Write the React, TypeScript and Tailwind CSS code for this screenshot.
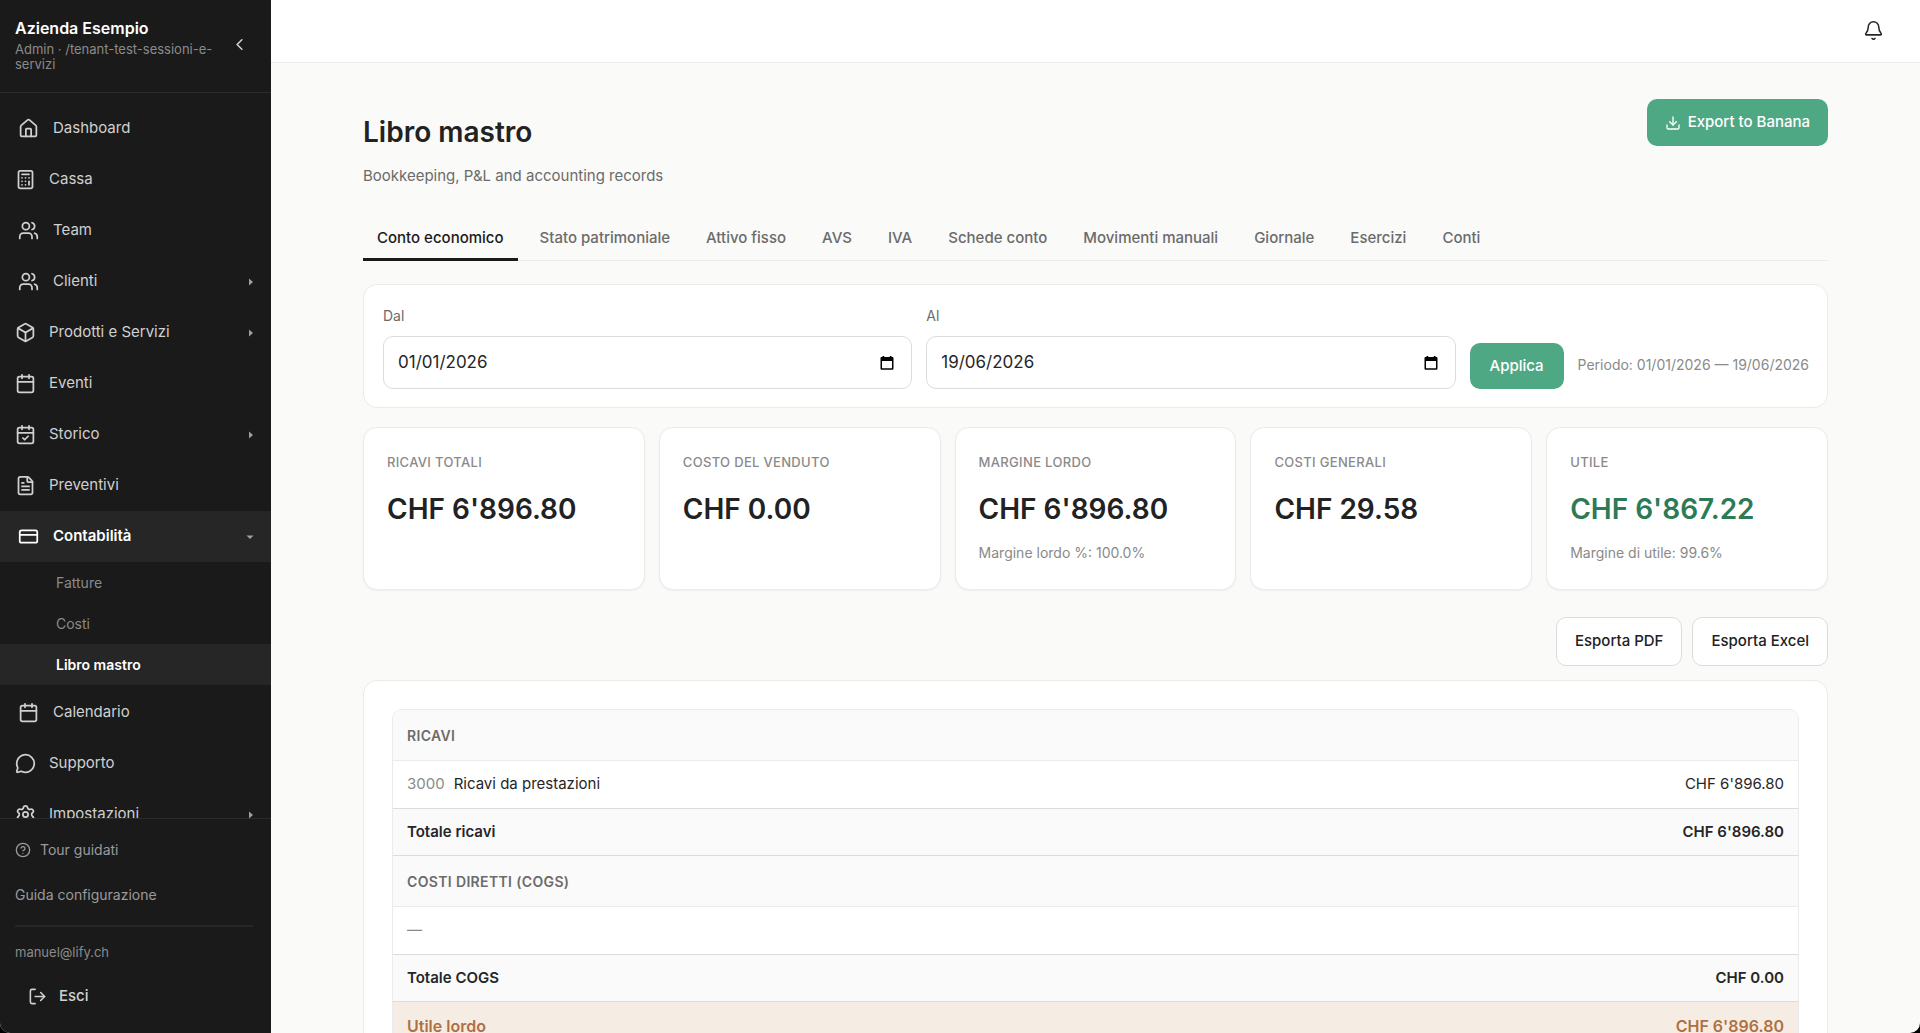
import { Fragment, useState } from "react"
import {
	Bell,
	Box,
	Calculator,
	Calendar,
	CalendarCheck,
	ChevronLeft,
	CircleHelp,
	CreditCard,
	Download,
	FileText,
	House,
	LogOut,
	MessageCircle,
	Settings,
	Users,
} from "lucide-react"
import type { LucideIcon } from "lucide-react"
import clsx from "clsx"

type NavItem = {
	label: string
	icon: LucideIcon
	inset?: boolean
	expandable?: boolean
	children?: string[]
}

const navItems: NavItem[] = [
	{ label: "Dashboard", icon: House, inset: true },
	{ label: "Cassa", icon: Calculator },
	{ label: "Team", icon: Users, inset: true },
	{ label: "Clienti", icon: Users, inset: true, expandable: true },
	{ label: "Prodotti e Servizi", icon: Box, expandable: true },
	{ label: "Eventi", icon: Calendar },
	{ label: "Storico", icon: CalendarCheck, expandable: true },
	{ label: "Preventivi", icon: FileText },
	{
		label: "Contabilità",
		icon: CreditCard,
		inset: true,
		expandable: true,
		children: ["Fatture", "Costi", "Libro mastro"],
	},
	{ label: "Calendario", icon: Calendar, inset: true },
	{ label: "Supporto", icon: MessageCircle },
	{ label: "Impostazioni", icon: Settings, expandable: true },
]

const tabs = [
	"Conto economico",
	"Stato patrimoniale",
	"Attivo fisso",
	"AVS",
	"IVA",
	"Schede conto",
	"Movimenti manuali",
	"Giornale",
	"Esercizi",
	"Conti",
]

const kpis = [
	{ label: "Ricavi totali", value: "CHF 6'896.80" },
	{ label: "Costo del venduto", value: "CHF 0.00" },
	{ label: "Margine lordo", value: "CHF 6'896.80", note: "Margine lordo %: 100.0%" },
	{ label: "Costi generali", value: "CHF 29.58" },
	{ label: "Utile", value: "CHF 6'867.22", note: "Margine di utile: 99.6%", positive: true },
]

const sections = [
	{
		title: "Ricavi",
		rows: [{ code: "3000", name: "Ricavi da prestazioni", amount: "CHF 6'896.80" }],
		totalLabel: "Totale ricavi",
		total: "CHF 6'896.80",
	},
	{
		title: "Costi diretti (COGS)",
		rows: [],
		totalLabel: "Totale COGS",
		total: "CHF 0.00",
	},
]

const Caret = ({ open }: { open: boolean }) => (
	<svg width="8" height="8" viewBox="0 0 8 8" fill="#a0a0a0" aria-hidden="true">
		<path d={open ? "M0.500 2.500h7L4 6z" : "M3 0.500v7l4-3.500z"} />
	</svg>
)

const Sidebar = () => (
	<aside className="w-[271px] shrink-0 flex flex-col bg-[#1a1a1a] text-[#d0d0d0]">
		<div className="h-[93px] shrink-0 flex items-start justify-between pl-[15px] pr-[22px] pt-[17px] border-b border-[#2a2a2a]">
			<div className="w-[200px]">
				<p className="text-[16px] leading-[22px] font-semibold text-white">Azienda Esempio</p>
				<p className="mt-[3px] text-[13px] leading-[15px] text-[#8a8a8a]">Admin · /tenant-test-sessioni-e-servizi</p>
			</div>
			<button className="mt-[18px]" aria-label="Comprimi menu">
				<ChevronLeft size={19} />
			</button>
		</div>

		<nav className="flex-1 min-h-0 overflow-hidden pt-[10px]">
			<ul>
				{navItems.map(({ label, icon: Icon, inset, expandable, children }) => (
					<li key={label}>
						<a
							href="#"
							className={clsx(
								"h-[51px] flex items-center pr-[17px] text-[15px]",
								inset ? "pl-[18px] gap-[14px]" : "pl-[15px] gap-[13px]",
								children && "bg-[#262626] font-semibold text-white",
							)}
						>
							<Icon size={21} strokeWidth={2} />
							<span className="flex-1">{label}</span>
							{expandable && <Caret open={!!children} />}
						</a>
						{children && (
							<div className="pb-[2px]">
								{children.map((child) => (
									<a
										key={child}
										href="#"
										className={clsx(
											"h-[41px] flex items-center pl-14 text-[14px]",
											child === "Libro mastro" ? "bg-[#262626] font-semibold text-white" : "text-[#8a8a8a]",
										)}
									>
										{child}
									</a>
								))}
							</div>
						)}
					</li>
				))}
			</ul>
		</nav>

		<div className="shrink-0 border-t border-[#2a2a2a] px-[15px] pt-2 pb-[15px] text-[#9a9a9a]">
			<a href="#" className="h-[45px] flex items-center gap-[9px] text-[14px]">
				<CircleHelp size={16} strokeWidth={2} />
				Tour guidati
			</a>
			<a href="#" className="h-[45px] flex items-center text-[14px]">Guida configurazione</a>
			<hr className="mt-2 mr-[3px] border-t-2 border-[#262626]" />
			<p className="mt-[15px] text-[13px] leading-5 text-[#8a8a8a]">manuel@lify.ch</p>
			<button className="mt-3 h-[44px] flex items-center gap-3 pl-[13px] text-[15px] font-medium text-[#d0d0d0]">
				<LogOut size={19} strokeWidth={2} />
				Esci
			</button>
		</div>
	</aside>
)

const DateField = ({ id, label, value }: { id: string; label: string; value: string }) => (
	<div className="flex-1 flex flex-col gap-[10px]">
		<label htmlFor={id} className="text-[14px] leading-5 text-[#6b6b6b]">{label}</label>
		<div className="h-[53px] flex items-center pl-[14px] pr-4 rounded-[10px] border border-[#dcdcdc] bg-white">
			<input
				id={id}
				defaultValue={value}
				className="flex-1 min-w-0 text-[17px] text-[#262626] outline-none"
			/>
			<button type="button" aria-label={`Apri calendario ${label}`}>
				<svg width="16" height="16" viewBox="0 0 16 16" aria-hidden="true">
					<path d="M3.5 1h1.7v1h5.6V1h1.7v1h.7c.8 0 1.3.5 1.3 1.300v10.200c0 .8-.5 1.300-1.300 1.300H2.800c-.8 0-1.300-.5-1.300-1.300V3.300C1.500 2.500 2 2 2.800 2h.7zM3 6v7.300h10V6z" />
				</svg>
			</button>
		</div>
	</div>
)

const ProfitTable = () => (
	<div className="rounded-[10px] border border-[#ebebeb] overflow-hidden">
		<table className="w-full border-separate border-spacing-0 text-[15px] text-[#262626]">
			<tbody>
				{sections.map((section) => (
					<Fragment key={section.title}>
						<tr className="h-[51px] bg-[#fafafa] text-[14px] text-[#6b6b6b]">
							<th colSpan={2} className="px-[14px] text-left font-semibold uppercase tracking-wide border-b border-[#ebebeb]">
								{section.title}
							</th>
						</tr>
						{section.rows.length === 0 && (
							<tr className="h-[47px]">
								<td colSpan={2} className="px-[14px] text-[#8a8a8a]">—</td>
							</tr>
						)}
						{section.rows.map((row) => (
							<tr key={row.code} className="h-[47px]">
								<td className="px-[14px]">
									<span className="mr-[9px] text-[#8a8a8a]">{row.code}</span>
									{row.name}
								</td>
								<td className="px-[14px] text-right">{row.amount}</td>
							</tr>
						))}
						<tr className="h-[48px] bg-[#fafafa] font-semibold">
							<td className="px-[14px] border-y border-[#dcdcdc]">{section.totalLabel}</td>
							<td className="px-[14px] text-right border-y border-[#dcdcdc]">{section.total}</td>
						</tr>
					</Fragment>
				))}
				<tr className="h-[48px] bg-[#f5ede3] font-semibold text-[16px] text-[#b07042]">
					<td className="px-[14px]">Utile lordo</td>
					<td className="px-[14px] text-right">CHF 6'896.80</td>
				</tr>
			</tbody>
		</table>
	</div>
)

export default function App() {
	const [activeTab, setActiveTab] = useState(tabs[0])

	return (
		<div className="h-screen bg-black font-['Inter',sans-serif]">
			<div className="h-full flex overflow-hidden rounded-b-[10px] bg-[#fafaf8]">
				<Sidebar />

				<div className="flex-1 min-w-0 flex flex-col">
					<header className="h-[63px] shrink-0 flex items-center justify-end pr-9 pb-[2px] bg-white border-b border-[#ebebeb]">
						<button aria-label="Notifiche" className="text-[#262626]">
							<Bell size={21} strokeWidth={1.75} />
						</button>
					</header>

					<main className="flex-1 min-h-0 overflow-hidden px-23 pt-9">
						<div className="flex items-start justify-between">
							<div className="pt-[13px]">
								<h1 className="text-[28px] leading-10 font-semibold text-[#222222]">Libro mastro</h1>
								<p className="mt-3 text-[15px] leading-6 text-[#6b6b6b]">Bookkeeping, P&L and accounting records</p>
							</div>
							<button className="h-[47px] flex items-center gap-[7px] px-[18px] rounded-[10px] bg-[#4fa884] text-[15px] font-medium text-white">
								<Download size={16} />
								Export to Banana
							</button>
						</div>

						<div role="tablist" className="mt-[29px] flex gap-2 border-b border-[#ebebeb]">
							{tabs.map((tab) => (
								<button
									key={tab}
									role="tab"
									aria-selected={tab === activeTab}
									onClick={() => setActiveTab(tab)}
									className={clsx(
										"h-[44px] px-[14px] pt-[2px] -mb-px border-b-3 text-[15px] font-medium",
										tab === activeTab ? "border-[#1a1a1a] text-[#1a1a1a]" : "border-transparent text-[#6b6b6b]",
									)}
								>
									{tab}
								</button>
							))}
						</div>

						<form className="mt-[23px] flex items-end gap-[14px] pl-[19px] pr-[18px] pt-[21px] pb-[18px] rounded-[14px] border border-[#ebebeb] bg-white">
							<DateField id="dal" label="Dal" value="01/01/2026" />
							<DateField id="al" label="Al" value="19/06/2026" />
							<button type="button" className="h-[46px] px-5 rounded-[10px] bg-[#4fa884] text-[15px] font-medium text-white">
								Applica
							</button>
							<span className="h-[49px] flex items-center text-[14px] text-[#8a8a8a]">
								Periodo: 01/01/2026 — 19/06/2026
							</span>
						</form>

						<div className="mt-[19px] grid grid-cols-5 gap-[14px]">
							{kpis.map((kpi) => (
								<div key={kpi.label} className="h-[163px] px-[23px] pt-[22px] rounded-[14px] border border-[#ebebeb] bg-white shadow-xs">
									<p className="text-[13px] leading-6 font-medium uppercase tracking-wide text-[#8a8a8a]">{kpi.label}</p>
									<p
										className={clsx(
											"mt-[17px] text-[28px] leading-9 font-semibold",
											kpi.positive ? "text-[#2d7a57]" : "text-[#222222]",
										)}
									>
										{kpi.value}
									</p>
									{kpi.note && <p className="mt-4 text-[14px] leading-5 text-[#8a8a8a]">{kpi.note}</p>}
								</div>
							))}
						</div>

						<div className="mt-[27px] flex justify-end gap-[10px]">
							{["Esporta PDF", "Esporta Excel"].map((label) => (
								<button
									key={label}
									className="h-[49px] px-[18px] rounded-[10px] border border-[#dcdcdc] bg-white text-[15px] font-medium text-[#222222]"
								>
									{label}
								</button>
							))}
						</div>

						<section className="mt-[14px] p-7 rounded-[14px] border border-[#ebebeb] bg-white">
							<ProfitTable />
						</section>
					</main>
				</div>
			</div>
		</div>
	)
}
